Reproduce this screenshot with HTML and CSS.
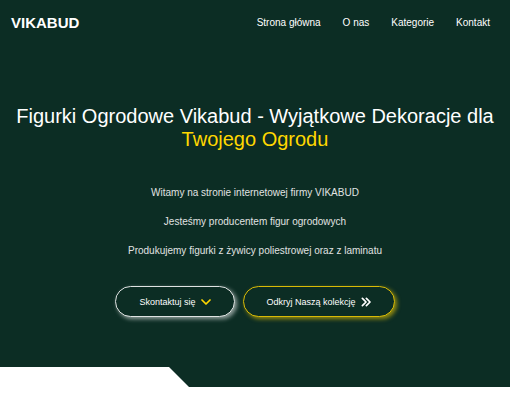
FILE: index.html
```html
<!DOCTYPE html>
<html lang="pl">
<head>
<meta charset="utf-8">
<meta name="viewport" content="width=device-width, initial-scale=1">
<title>VIKABUD</title>
<link rel="stylesheet" href="styles.css">
</head>
<body>
<div class="page">
  <header class="header">
    <a class="logo" href="#">VIKABUD</a>
    <nav class="nav">
      <a href="#">Strona główna</a>
      <a href="#">O nas</a>
      <a href="#">Kategorie</a>
      <a href="#">Kontakt</a>
    </nav>
  </header>
  <main class="hero">
    <h1 class="title">Figurki Ogrodowe Vikabud - Wyjątkowe Dekoracje dla <span class="accent">Twojego Ogrodu</span></h1>
    <div class="intro">
      <p>Witamy na stronie internetowej firmy VIKABUD</p>
      <p>Jesteśmy producentem figur ogrodowych</p>
      <p>Produkujemy figurki z żywicy poliestrowej oraz z laminatu</p>
    </div>
    <div class="actions">
      <button class="button" type="button">Skontaktuj się
        <svg class="icon accent" viewBox="0 0 10 10" aria-hidden="true"><path d="M1 3l4 4 4-4"/></svg>
      </button>
      <button class="button button-gold" type="button">Odkryj Naszą kolekcję
        <svg class="icon" viewBox="0 0 10 10" aria-hidden="true"><path d="M1.4 1.4L5 5 1.4 8.6M5.4 1.4L9 5 5.4 8.6"/></svg>
      </button>
    </div>
  </main>
</div>
</body>
</html>
```
FILE: styles.css
```css
* {
  box-sizing: border-box;
}

body {
  margin: 0;
  background: #fff;
  color: #fff;
  font-family: "Liberation Sans", Arial, sans-serif;
  font-size: 10px;
}

.page {
  padding-bottom: 70px;
  background: #0c2d24;
  clip-path: polygon(0 0, 100% 0, 100% 100%, 189px 100%, 169px calc(100% - 20px), 0 calc(100% - 20px));
}

.header {
  display: flex;
  align-items: center;
  justify-content: space-between;
  height: 45px;
  padding: 0 20px 0 11px;
}

.header a {
  color: inherit;
  text-decoration: none;
}

.logo {
  font-size: 15px;
  font-weight: bold;
}

.nav {
  display: flex;
  gap: 22px;
}

.hero {
  display: flex;
  flex-direction: column;
  align-items: center;
  padding: 60px 12px 0;
  text-align: center;
}

.title {
  margin: 0;
  font-size: 20px;
  font-weight: normal;
  line-height: 23px;
}

.accent {
  color: #ffd700;
}

.intro {
  display: grid;
  gap: 14px;
  margin: 34px 0 28px;
  color: #e0e3e2;
  line-height: 15px;
}

.intro p {
  margin: 0;
}

.actions {
  display: flex;
  gap: 8px;
}

.button {
  display: flex;
  align-items: center;
  gap: 5px;
  height: 31px;
  padding: 0 23px;
  border: 1px solid #dfe3e2;
  border-radius: 16px;
  background: #0c2d24;
  box-shadow: 2px 2px 4px rgba(255, 255, 255, 0.55);
  color: #fff;
  font-family: inherit;
  font-size: 9px;
}

.button-gold {
  border-color: #d9ba06;
  box-shadow: 2px 2px 4px rgba(255, 215, 0, 0.55);
}

.icon {
  width: 10px;
  height: 10px;
  fill: none;
  stroke: currentColor;
  stroke-width: 1.7;
  stroke-linecap: round;
  stroke-linejoin: round;
}
```
